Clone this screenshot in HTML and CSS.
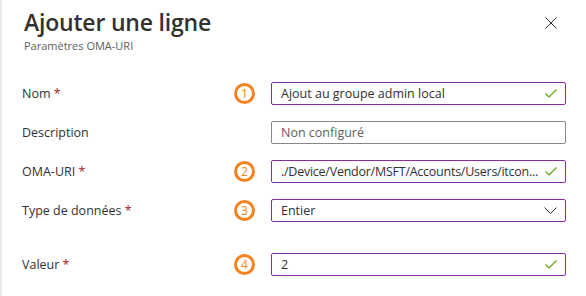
FILE: index.html
```html
<!DOCTYPE html>
<html lang="fr">
<head>
    <meta charset="UTF-8">
    <title>Ajouter une ligne</title>
    <link rel="stylesheet" href="styles.css">
</head>
<body>

    <section class="panel">

        <header class="panel-header">
            <div>
                <h1 class="panel-title">Ajouter une ligne</h1>
                <p class="panel-subtitle">Paramètres OMA-URI</p>
            </div>
            <button class="close" aria-label="Fermer">
                <svg width="12" height="12" viewBox="0 0 12 12"><path d="M0.5 0.5 L11.5 11.5 M11.5 0.5 L0.5 11.5" stroke="#323130" stroke-width="1" fill="none"/></svg>
            </button>
        </header>

        <form class="fields">

            <div class="row">
                <label class="label">Nom <span class="req">*</span></label>
                <span class="step">1</span>
                <div class="field valid">
                    <span class="value">Ajout au groupe admin local</span>
                    <svg class="check" width="12" height="9" viewBox="0 0 12 9"><path d="M0.5 4.5 L4 8 L11.5 0.5" stroke="#57a300" stroke-width="1.1" fill="none"/></svg>
                </div>
            </div>

            <div class="row">
                <label class="label">Description</label>
                <span class="step empty"></span>
                <div class="field">
                    <span class="value placeholder">Non configuré</span>
                </div>
            </div>

            <div class="row">
                <label class="label">OMA-URI <span class="req">*</span></label>
                <span class="step">2</span>
                <div class="field valid">
                    <span class="value tight">./Device/Vendor/MSFT/Accounts/Users/itcon...</span>
                    <svg class="check" width="12" height="9" viewBox="0 0 12 9"><path d="M0.5 4.5 L4 8 L11.5 0.5" stroke="#57a300" stroke-width="1.1" fill="none"/></svg>
                </div>
            </div>

            <div class="row">
                <label class="label">Type de données <span class="req">*</span></label>
                <span class="step">3</span>
                <div class="field valid">
                    <span class="value">Entier</span>
                    <svg class="chevron" width="13" height="8" viewBox="0 0 13 8"><path d="M0.5 0.5 L6.5 6.5 L12.5 0.5" stroke="#323130" stroke-width="1" fill="none"/></svg>
                </div>
            </div>

            <div class="row row-spaced">
                <label class="label">Valeur <span class="req">*</span></label>
                <span class="step">4</span>
                <div class="field valid">
                    <span class="value">2</span>
                    <svg class="check" width="12" height="9" viewBox="0 0 12 9"><path d="M0.5 4.5 L4 8 L11.5 0.5" stroke="#57a300" stroke-width="1.1" fill="none"/></svg>
                </div>
            </div>

        </form>

    </section>

</body>
</html>
```

FILE: styles.css
```css
* {
    box-sizing: border-box;
}

body {
    margin: 0;
    background: #ffffff;
    color: #323130;
    font-family: "Open Sans", "Noto Sans", sans-serif;
    width: 586px;
    height: 296px;
    overflow: hidden;
}

.panel {
    height: 100%;
    padding: 7px 20px 0 22px;
    border-left: 2px solid #ebebeb;
}

.panel-header {
    display: flex;
    justify-content: space-between;
    align-items: flex-start;
}

.panel-title {
    margin: 0;
    font-size: 23px;
    font-weight: 600;
    line-height: 30px;
    letter-spacing: -0.2px;
}

.panel-subtitle {
    margin: 2px 0 0;
    font-size: 11px;
    color: #605e5c;
    line-height: 14px;
}

.close {
    border: 0;
    background: none;
    padding: 0;
    margin: 10px 9px 0 0;
    width: 12px;
    height: 12px;
    display: flex;
}

.fields {
    margin-top: 29px;
    display: flex;
    flex-direction: column;
    gap: 16px;
    margin-left: -2px;
}

.row {
    display: flex;
    align-items: center;
    height: 23px;
}

.row-spaced {
    margin-top: 15px;
}

.label {
    flex: none;
    width: 212px;
    font-size: 12.5px;
}

.req {
    color: #a4262c;
}

.step {
    flex: none;
    width: 21px;
    height: 21px;
    border: 3px solid #f58220;
    border-radius: 50%;
    color: #f58220;
    font-size: 12px;
    line-height: 15px;
    text-align: center;
    font-weight: 400;
    margin-right: 16px;
}

.step.empty {
    border-color: transparent;
}

.field {
    flex: 1;
    min-width: 0;
    height: 23px;
    border: 1px solid #8a8886;
    border-radius: 2px;
    display: flex;
    align-items: center;
    padding: 0 8px 0 9px;
    font-size: 12.5px;
    gap: 2px;
}

.field.valid {
    border-color: #8a2da5;
}

.value {
    flex: 1;
    min-width: 0;
    white-space: nowrap;
}

.tight {
    letter-spacing: -0.25px;
}

.placeholder {
    color: #605e5c;
}

.check, .chevron {
    flex: none;
}
```
